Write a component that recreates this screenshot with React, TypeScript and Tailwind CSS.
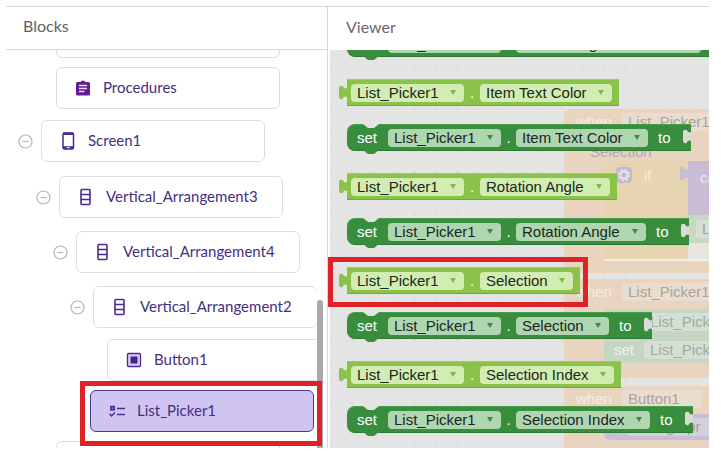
import type { ReactNode } from 'react'
import clsx from 'clsx'

type IconName = 'procedures' | 'screen' | 'arrangement' | 'button' | 'list'

type TreeItem = {
  label: string
  icon: IconName
  indent: string
  gap: string
  collapsible?: boolean
  selected?: boolean
}

const treeItems: TreeItem[] = [
  { label: 'Procedures', icon: 'procedures', indent: 'pl-[50px]', gap: 'pt-[9px]' },
  { label: 'Screen1', icon: 'screen', indent: 'pl-[12px]', gap: 'pt-[11px]', collapsible: true },
  { label: 'Vertical_Arrangement3', icon: 'arrangement', indent: 'pl-[30px]', gap: 'pt-[14px]', collapsible: true },
  { label: 'Vertical_Arrangement4', icon: 'arrangement', indent: 'pl-[47px]', gap: 'pt-[13px]', collapsible: true },
  { label: 'Vertical_Arrangement2', icon: 'arrangement', indent: 'pl-[64px]', gap: 'pt-[13px]', collapsible: true },
  { label: 'Button1', icon: 'button', indent: 'pl-[101px]', gap: 'pt-[11px]' },
  { label: 'List_Picker1', icon: 'list', indent: 'pl-[84px]', gap: 'pt-[9px]', selected: true },
]

const properties = [
  { name: 'Item Text Color' },
  { name: 'Rotation Angle' },
  { name: 'Selection', highlighted: true },
  { name: 'Selection Index' },
]

function TreeIcon({ name }: { name: IconName }) {
  switch (name) {
    case 'procedures':
      return (
        <svg viewBox="0 0 16 16" className="h-4 w-4 shrink-0" fill="none">
          <path d="M2.5 2H5.6a2.5 2.2 0 0 1 4.8 0h3.1q1.5 0 1.5 1.5v10.5q0 1.5-1.5 1.5h-11q-1.5 0-1.5-1.5V3.5Q1 2 2.5 2z" fill="#641c96" />
          <path d="M4 5.5h8M4 8.5h8M4 11.5h5.5" stroke="#eadcf3" strokeWidth="1.3" />
        </svg>
      )
    case 'screen':
      return (
        <svg viewBox="0 0 16 18" className="h-[18px] w-4 shrink-0" fill="none">
          <rect x="3" y="1" width="10.500" height="16" rx="1.500" stroke="#4a2a94" strokeWidth="1.500" />
          <path d="M3 1.800h10.500M3 15.500h10.500" stroke="#4a2a94" strokeWidth="2.500" />
          <path d="M7 15.500h2.500" stroke="#fff" strokeWidth="1" />
        </svg>
      )
    case 'arrangement':
      return (
        <svg viewBox="0 0 16 18" className="h-[18px] w-4 shrink-0" fill="none" stroke="#4a2a94" strokeWidth="1.600">
          <rect x="3" y="1.500" width="9" height="15" rx="1" />
          <path d="M3 6.500h9M3 11.500h9" />
        </svg>
      )
    case 'button':
      return (
        <svg viewBox="0 0 16 16" className="h-4 w-4 shrink-0" fill="none">
          <rect x="1.500" y="1.500" width="13" height="13" rx="1" fill="#d9cff2" stroke="#4a2a94" strokeWidth="1.300" />
          <rect x="4.500" y="4.500" width="7" height="7" fill="#43208f" />
        </svg>
      )
    case 'list':
      return (
        <svg viewBox="0 0 16 16" className="h-4 w-4 shrink-0" fill="none" stroke="#4a2a94" strokeWidth="1.500">
          <rect x="1.800" y="3.500" width="3.400" height="3.400" fill="#8f78cc" />
          <path d="M8 5.500h8M8 11.500h8" />
          <path d="M0.500 10.800l2 2.200L6 9.500" />
        </svg>
      )
  }
}

function TreeRow({ item }: { item: TreeItem }) {
  return (
    <li className={clsx('flex w-[310px] items-center gap-2', item.indent, item.gap, !item.selected && 'overflow-hidden')}>
      {item.collapsible && (
        <button type="button" aria-label={`Collapse ${item.label}`} className="shrink-0">
          <svg viewBox="0 0 15 15" className="h-[15px] w-[15px]" fill="none" stroke="#b5b5b5" strokeWidth="1.200">
            <circle cx="7.500" cy="7.500" r="6.500" />
            <path d="M4.500 7.500h6" />
          </svg>
        </button>
      )}
      <div className="relative shrink-0">
        <button
          type="button"
          className={clsx(
            'flex h-[42px] w-[224px] items-center gap-3 rounded-md border pl-[18px] text-[15px] text-[#43307f]',
            item.selected ? 'border-[#4b3a8c] bg-[#d0c4f2]' : 'border-[#dedede] bg-white',
          )}
        >
          <TreeIcon name={item.icon} />
          <span className="pb-0.5">{item.label}</span>
        </button>
        {item.selected && (
          <div className="pointer-events-none absolute -top-[9px] -right-2 -bottom-[14px] -left-[10px] border-5 border-[#df2228]" />
        )}
      </div>
    </li>
  )
}

function BlocksPanel() {
  return (
    <aside className="flex w-[322px] shrink-0 flex-col border-r border-[#d6d6d6]">
      <h2 className="shrink-0 border-b border-[#d6d6d6] pt-[7px] pb-[11px] pl-[17px] text-base text-[#5f635f]">Blocks</h2>
      <div className="relative min-h-0 flex-1 overflow-hidden">
        <div className="absolute top-[250px] right-1 bottom-0 w-1.5 rounded-t-full bg-[#a9a9a9]" />
        <ul className="relative">
          <li className="ml-[50px] h-2 w-[224px] rounded-b-md border border-t-0 border-[#dedede]" />
          {treeItems.map((item) => (
            <TreeRow key={item.label} item={item} />
          ))}
          <li className="mt-[9px] ml-[50px] h-[42px] w-[224px] rounded-md border border-[#dedede]" />
        </ul>
      </div>
    </aside>
  )
}

function Field({ value, label, tone }: { value: string; label: string; tone: 'light' | 'dark' }) {
  return (
    <span className="relative flex shrink-0 items-center">
      <select
        aria-label={label}
        className={clsx(
          'h-[18px] appearance-none rounded-sm pr-[25px] pl-1.5 text-[15px] leading-[18px] text-[#1c261c]',
          tone === 'light' ? 'bg-[#d1edb1]' : 'bg-[#afd6b1]',
        )}
      >
        <option>{value}</option>
      </select>
      <svg viewBox="0 0 6 5" className={clsx('pointer-events-none absolute right-2 h-[5px] w-1.5', tone === 'light' ? 'fill-[#7fb84a]' : 'fill-[#388e3c]')}>
        <path d="M0 0h6L3 5z" />
      </svg>
    </span>
  )
}

function GetterBlock({ property, highlighted }: { property: string; highlighted?: boolean }) {
  return (
    <div className="relative flex h-[27px] w-max items-center border-t border-b border-t-[#9bd05c] border-b-[#72a83c] bg-[#8bc34a] pr-[7px] pl-1">
      <svg viewBox="0 0 8 16" className="absolute top-[5px] -left-2 h-4 w-2" fill="#8bc34a">
        <path d="M8 3C6 4 5 3 3.500 1Q0 0 0 3v8q0 4 3.500 3C5 11 6 11 8 12z" />
      </svg>
      <Field value="List_Picker1" label="Component" tone="light" />
      <span className="w-4 text-center text-[15px] leading-[18px] text-white">.</span>
      <Field value={property} label="Property" tone="light" />
      {highlighted && (
        <div className="pointer-events-none absolute -top-[11px] -right-2 -bottom-[14px] -left-[19px] border-5 border-[#df2228]" />
      )}
    </div>
  )
}

function SetterBlock({ property }: { property: string }) {
  return (
    <div className="relative flex h-[27px] w-max items-center rounded-l-lg border-t border-b border-t-[#4a9d4e] border-b-[#2c7a31] bg-[#388e3c] pr-5 pl-2.5 text-[15px] leading-[18px] text-white">
      <svg viewBox="0 0 16 4" className="absolute -top-px left-4 h-1 w-4" fill="#e4e4e4">
        <path d="M0 0h16l-5 4H5z" />
      </svg>
      <svg viewBox="0 0 16 5" className="absolute -bottom-[5px] left-4 h-[5px] w-4" fill="#388e3c">
        <path d="M0 0h16l-5 4H5z" />
      </svg>
      <span className="w-[31px]">set</span>
      <Field value="List_Picker1" label="Component" tone="dark" />
      <span className="w-[15px] text-center">.</span>
      <Field value={property} label="Property" tone="dark" />
      <span className="pl-2.5">to</span>
      <svg viewBox="0 0 8 16" className="absolute top-1 right-0 h-4 w-2" fill="#dcdcd6">
        <path d="M8 3C6 4 5 3 3.500 1Q0 0 0 3v8q0 4 3.500 3C5 11 6 11 8 12z" />
      </svg>
    </div>
  )
}

function EventBlock({ component, className, children }: { component: string; className: string; children: ReactNode }) {
  return (
    <div className={clsx('absolute left-[234px] w-[180px] rounded-md bg-[#e9d5bf] pt-1 whitespace-nowrap', className)}>
      <div className="flex gap-2 pl-3">
        <span className="w-[38px] text-[#f5ece2]">when</span>
        <span className="rounded-sm bg-[#e9ddd0] pr-[22px] pl-1.5 text-[#aaa49c]">{component}</span>
      </div>
      {children}
    </div>
  )
}

// Workspace blocks, dimmed behind the open flyout
function Workspace() {
  return (
    <div className="absolute inset-0 overflow-hidden bg-[radial-gradient(#d6d6d6_1px,transparent_1px)] bg-[size:21px_21px] bg-[position:12px_7px] text-[15px] leading-[18px]">
      <EventBlock component="List_Picker1" className="top-[59px] h-[164px]">
        <div className="pt-3 pl-[26px] text-[#b3aab5]">Selection</div>
        <div className="ml-10 flex border-b-2 border-[#f3eee4]">
          <div className="flex h-[98px] w-[84px] shrink-0 gap-3 rounded-md bg-[#e6d5b0] pt-1.5 pl-3">
            <svg viewBox="0 0 16 16" className="h-4 w-4 rounded-sm bg-[#c3b8d2]" fill="none" stroke="#ece6ec">
              <circle cx="8" cy="8" r="3.500" strokeWidth="2" />
              <circle cx="8" cy="8" r="5.500" strokeWidth="1.500" strokeDasharray="2.160 2.160" />
            </svg>
            <span className="text-[#f7efe0]">if</span>
          </div>
          <div className="flex flex-1 flex-col bg-[#e6e5e2]">
            <div className="relative h-[54px] bg-[#c8bdd5] pt-2 pl-3 text-[#efeaf1]">
              <svg viewBox="0 0 8 16" className="absolute top-[5px] -left-2 h-4 w-2" fill="#c8bdd5">
                <path d="M8 3C6 4 5 3 3.500 1Q0 0 0 3v8q0 4 3.500 3C5 11 6 11 8 12z" />
              </svg>
              call
            </div>
            <div className="flex h-[28px] items-center bg-[#c7d8c3] pl-2">
              <span className="rounded-sm bg-[#d6dfd2] px-1.5 text-[#9ea79c]">List_Picker1</span>
            </div>
          </div>
        </div>
      </EventBlock>

      <EventBlock component="List_Picker1" className="top-[229px] h-[99px]">
        <div className="mt-2 ml-10 flex flex-col gap-2.5 rounded-l-md bg-[#c5d6c3] pt-1 pb-1 pl-2.5 text-[#a2aaa1]">
          <div className="ml-[30px] w-max rounded-sm bg-[#d5dfd3] px-1.5">List_Picker1</div>
          <div className="flex">
            <span className="w-[30px] text-[#eef3ed]">set</span>
            <span className="rounded-sm bg-[#d5dfd3] px-1.5">List_Picker1</span>
          </div>
        </div>
      </EventBlock>

      <EventBlock component="Button1" className="top-[336px] h-[70px]">
        <div className="mt-1.5 ml-10 flex rounded-l-md bg-[#c8bdd8] py-1 pl-[22px]">
          <span className="rounded-sm bg-[#d5cedb] pr-4 pl-1.5 text-[#a39daa]">Dialog1.pr</span>
        </div>
      </EventBlock>
    </div>
  )
}

function Viewer() {
  return (
    <main className="flex min-w-0 flex-1 flex-col overflow-hidden">
      <h2 className="relative z-10 shrink-0 bg-white pt-2 pb-[11px] pl-[18px] text-base text-[#6c666c]">Viewer</h2>
      <div className="relative min-h-0 flex-1 border-l-2 border-white bg-[#e4e4e4] font-['Liberation_Sans',Arial,sans-serif]">
        <Workspace />
        <div className="relative -mt-5 pl-[17px]">
          <SetterBlock property="Item Background Color" />
          {properties.map(({ name, highlighted }) => (
            <div key={name} className="flex flex-col gap-[18px] pt-[22px]">
              <GetterBlock property={name} highlighted={highlighted} />
              <SetterBlock property={name} />
            </div>
          ))}
        </div>
      </div>
    </main>
  )
}

export default function App() {
  return (
    <div className="h-screen bg-white pt-1.5 pr-3 pb-[17px] pl-1.5 font-[Lato,sans-serif]">
      <div className="flex h-full overflow-hidden border-t border-[#d6d6d6]">
        <BlocksPanel />
        <Viewer />
      </div>
    </div>
  )
}
